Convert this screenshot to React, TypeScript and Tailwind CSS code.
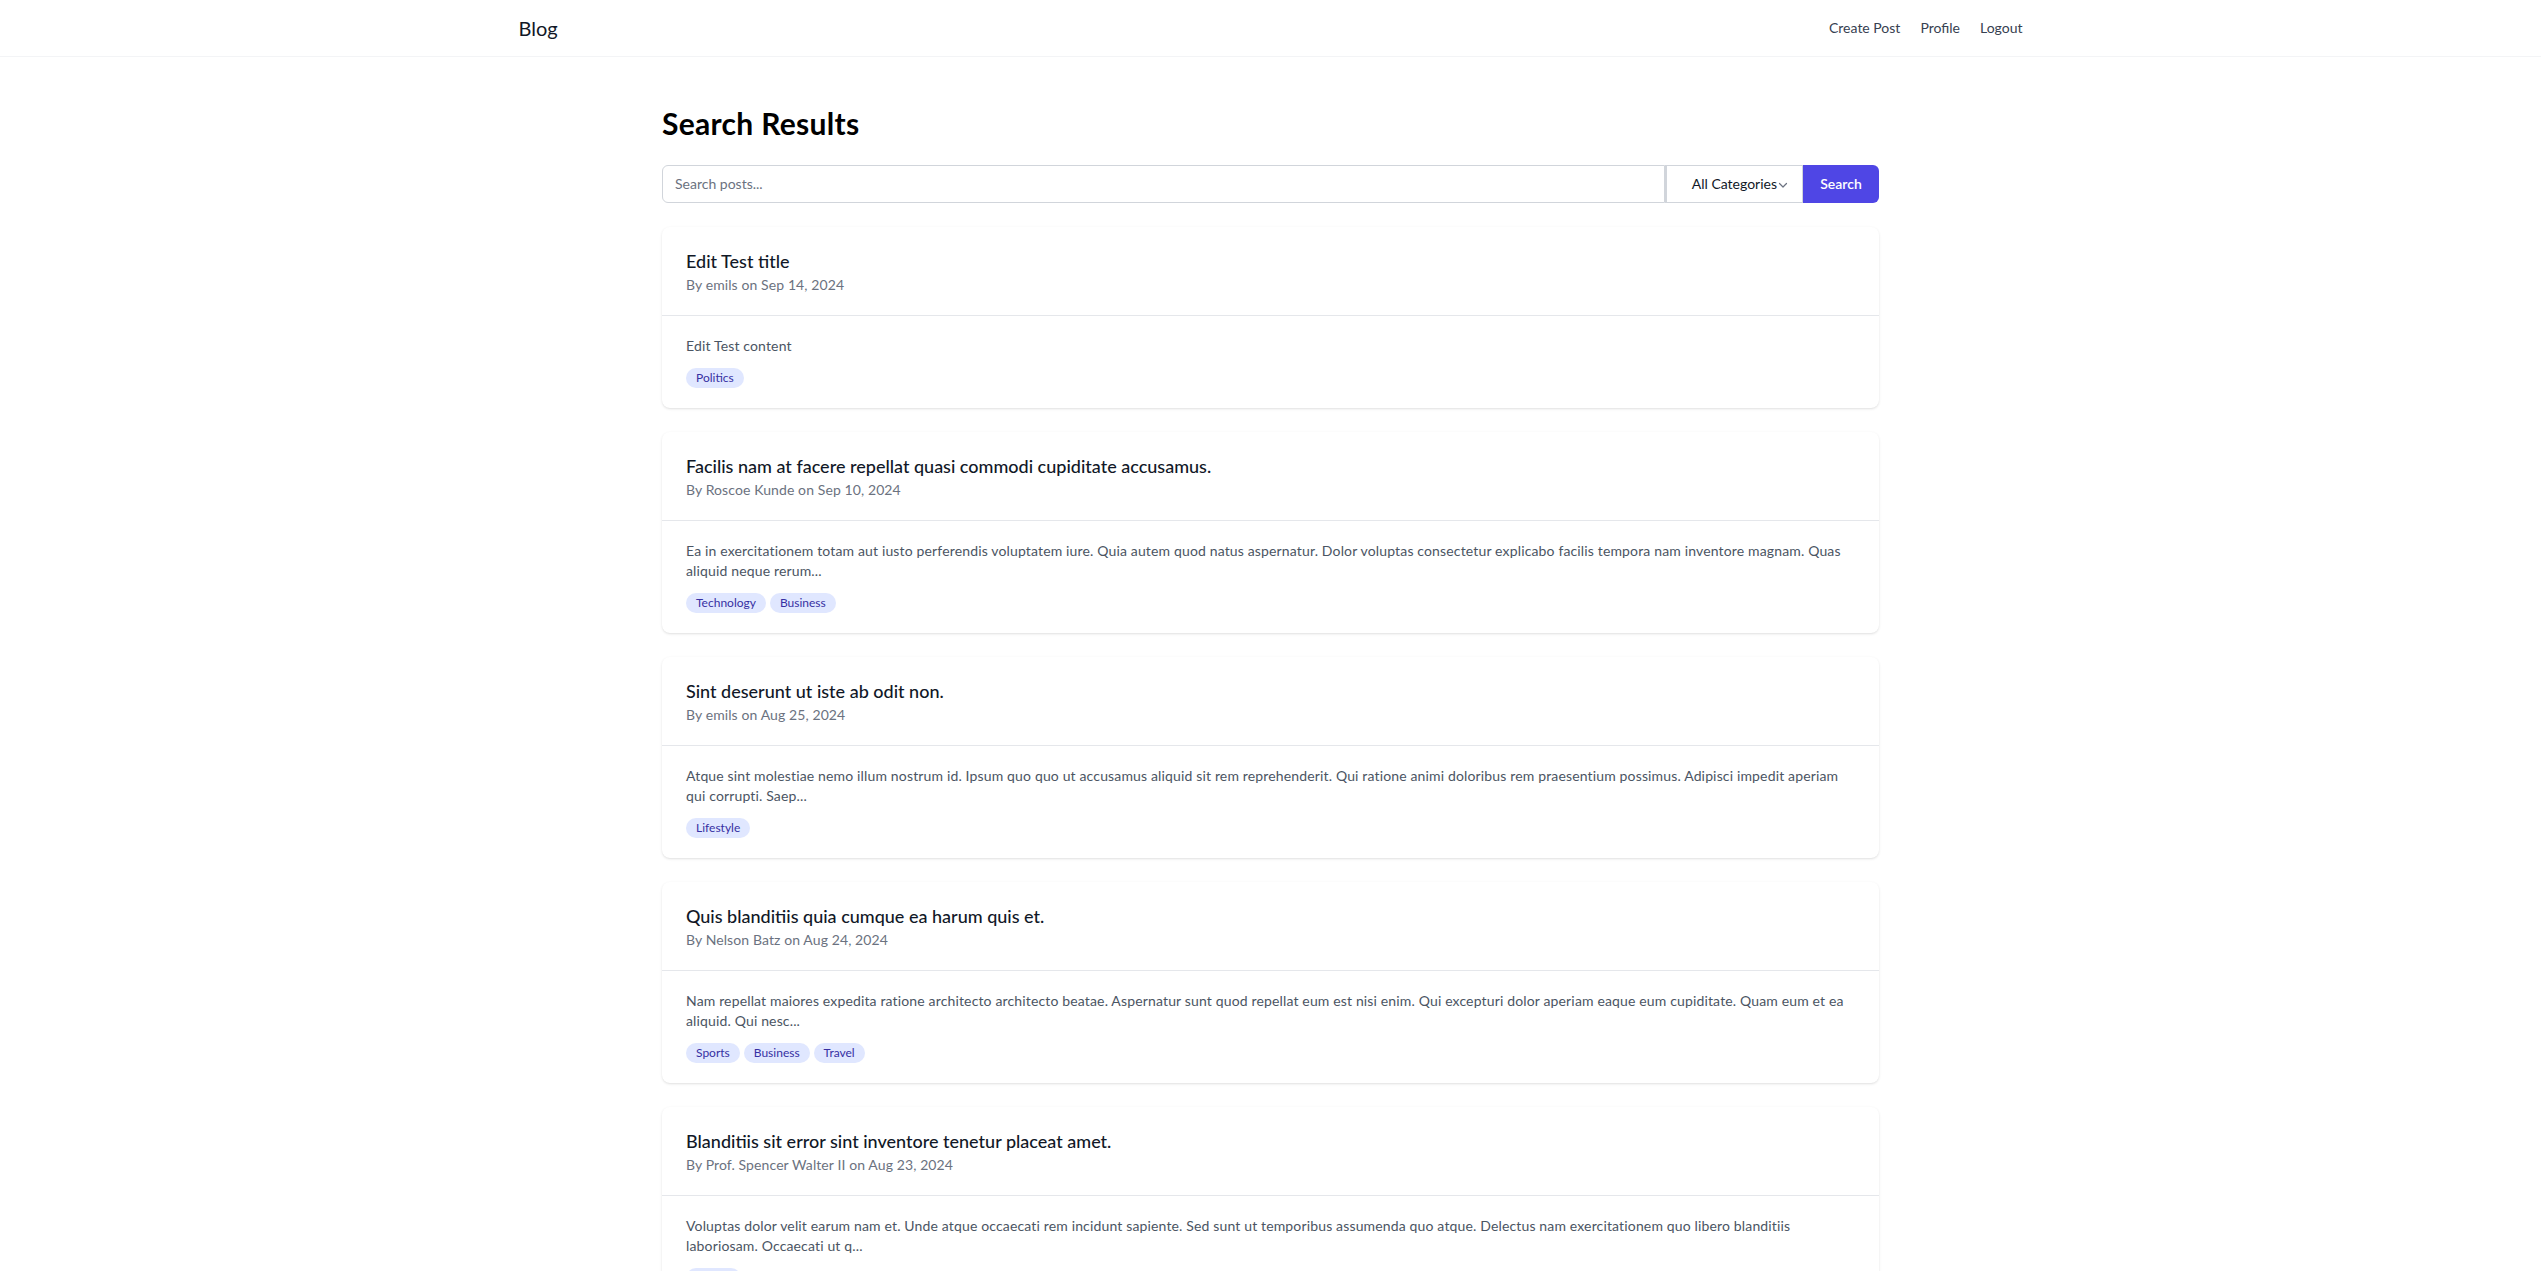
import React from "react";

type Post = {
  title: string;
  author: string;
  date: string;
  content: string;
  tags: string[];
};

const posts: Post[] = [
  {
    title: "Edit Test title",
    author: "emils",
    date: "Sep 14, 2024",
    content: "Edit Test content",
    tags: ["Politics"],
  },
  {
    title: "Facilis nam at facere repellat quasi commodi cupiditate accusamus.",
    author: "Roscoe Kunde",
    date: "Sep 10, 2024",
    content:
      "Ea in exercitationem totam aut iusto perferendis voluptatem iure. Quia autem quod natus aspernatur. Dolor voluptas consectetur explicabo facilis tempora nam inventore magnam. Quas aliquid neque rerum...",
    tags: ["Technology", "Business"],
  },
  {
    title: "Sint deserunt ut iste ab odit non.",
    author: "emils",
    date: "Aug 25, 2024",
    content:
      "Atque sint molestiae nemo illum nostrum id. Ipsum quo quo ut accusamus aliquid sit rem reprehenderit. Qui ratione animi doloribus rem praesentium possimus. Adipisci impedit aperiam qui corrupti. Saep...",
    tags: ["Lifestyle"],
  },
  {
    title: "Quis blanditiis quia cumque ea harum quis et.",
    author: "Nelson Batz",
    date: "Aug 24, 2024",
    content:
      "Nam repellat maiores expedita ratione architecto architecto beatae. Aspernatur sunt quod repellat eum est nisi enim. Qui excepturi dolor aperiam eaque eum cupiditate. Quam eum et ea aliquid. Qui nesc...",
    tags: ["Sports", "Business", "Travel"],
  },
  {
    title: "Blanditiis sit error sint inventore tenetur placeat amet.",
    author: "Prof. Spencer Walter II",
    date: "Aug 23, 2024",
    content:
      "Voluptas dolor velit earum nam et. Unde atque occaecati rem incidunt sapiente. Sed sunt ut temporibus assumenda quo atque. Delectus nam exercitationem quo libero blanditiis laboriosam. Occaecati ut q...",
    tags: ["Health"],
  },
];

function Chevron() {
  return (
    <svg width="10" height="10" viewBox="0 0 10 10" fill="none" className="ml-[1px] mt-[2px]">
      <path d="M1.5 3.5 L5 7 L8.5 3.5" stroke="#6b7280" strokeWidth="1.2" strokeLinecap="round" strokeLinejoin="round" />
    </svg>
  );
}

function PostCard({ post }: { post: Post }) {
  return (
    <div className="bg-white rounded-lg shadow">
      <div className="px-6 py-5 border-b border-[#e5e7eb]">
        <h2 className="text-lg text-[#111827] font-medium">{post.title}</h2>
        <p className="text-sm text-[#6b7280] tracking-[0.1px]">
          By {post.author} on {post.date}
        </p>
      </div>
      <div className="px-6 py-5">
        <p className="text-sm text-[#4b5563] tracking-[0.15px]">{post.content}</p>
        <div className="mt-3 flex gap-1">
          {post.tags.map((t) => (
            <span
              key={t}
              className="inline-flex items-center rounded-full bg-[#e0e7ff] px-2.5 py-0.5 text-xs text-[#3730a3]"
            >
              {t}
            </span>
          ))}
        </div>
      </div>
    </div>
  );
}

export default function App() {
  return (
    <div
      className="min-h-screen bg-white"
      style={{ fontFamily: '"Segoe UI", Lato, "Noto Sans", sans-serif' }}
    >
      <header className="bg-white border-b border-[#f3f4f6]">
        <div className="max-w-[1536px] mx-auto px-4 h-14 flex items-center justify-between">
          <div className="text-xl text-[#111827]">Blog</div>
          <nav className="flex items-center gap-5 text-sm text-[#374151]">
            <span>Create Post</span>
            <span>Profile</span>
            <span>Logout</span>
          </nav>
        </div>
      </header>

      <main className="w-[1217px] mx-auto py-12">
        <h1 className="text-3xl font-bold text-black mb-6 tracking-[0.3px]">Search Results</h1>

        <div className="flex mb-6">
          <div className="flex-1 h-[38px] border border-[#d1d5db] rounded-l-md px-3 flex items-center text-sm text-[#6b7280]">
            Search posts...
          </div>
          <div className="w-[138px] h-[38px] border border-[#d1d5db] border-l-2 flex items-center justify-end pr-[14px] text-sm text-[#111827]">
            All Categories
            <Chevron />
          </div>
          <div className="w-[76px] h-[38px] bg-[#4f46e5] rounded-r-md flex items-center justify-center text-sm font-semibold text-white">
            Search
          </div>
        </div>

        <div className="space-y-6">
          {posts.map((p) => (
            <PostCard key={p.title} post={p} />
          ))}
        </div>
      </main>
    </div>
  );
}
